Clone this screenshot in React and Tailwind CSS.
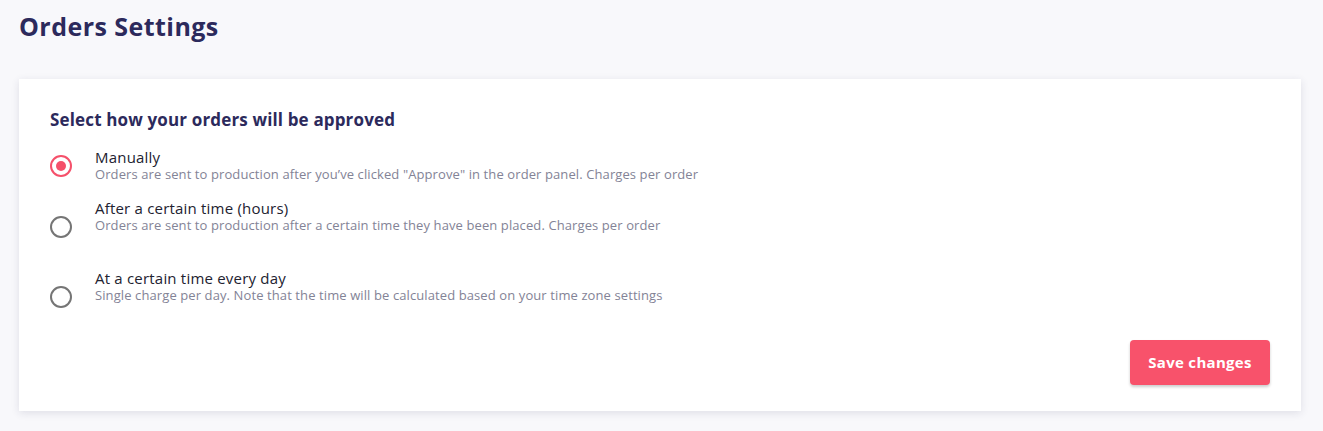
import React from "react";

const font = { fontFamily: "'Open Sans', Lato, sans-serif" };

function Radio({ checked }) {
  return (
    <span
      className={`flex h-[22px] w-[22px] shrink-0 items-center justify-center rounded-full border-2 ${
        checked ? "border-[#f5506a]" : "border-[#757575]"
      }`}
    >
      {checked && <span className="h-[10px] w-[10px] rounded-full bg-[#f5506a]" />}
    </span>
  );
}

function Option({ checked, title, desc, radioOffset, className }) {
  return (
    <div className={`flex items-start ${className}`}>
      <div className={`w-[45px] ${radioOffset}`}>
        <Radio checked={checked} />
      </div>
      <div className="flex flex-col">
        <span className="text-[15px] leading-[18px] tracking-[0.2px] text-[#222230]">{title}</span>
        <span className="text-[13px] leading-[16px] tracking-[0.1px] text-[#838396]">{desc}</span>
      </div>
    </div>
  );
}

export default function App() {
  return (
    <div className="min-h-[431px] bg-[#f8f8fb] pl-[19px] pr-[22px] pt-[10px]" style={font}>
      <h1 className="text-[25px] font-bold leading-[32px] tracking-[0.45px] text-[#2c2a5c]">Orders Settings</h1>
      <div className="mt-[37px] bg-white px-[31px] pb-[26px] pt-[31px] shadow-[0_2px_8px_rgba(40,40,80,0.12)]">
        <h2 className="text-[17px] font-bold leading-[20px] tracking-[0.15px] text-[#2c2a5c]">
          Select how your orders will be approved
        </h2>
        <Option
          className="mt-[18px]"
          checked
          title="Manually"
          desc={'Orders are sent to production after you\u2019ve clicked "Approve" in the order panel. Charges per order'}
          radioOffset="pt-[7px]"
        />
        <Option
          className="mt-[17px]"
          title="After a certain time (hours)"
          desc="Orders are sent to production after a certain time they have been placed. Charges per order"
          radioOffset="pt-[17px]"
        />
        <Option
          className="mt-[31px]"
          title="At a certain time every day"
          desc="Single charge per day. Note that the time will be calculated based on your time zone settings"
          radioOffset="pt-[17px]"
        />
        <div className="mt-[32px] flex justify-end">
          <button className="h-[45px] w-[140px] rounded-[4px] bg-[#f8526b] text-[15px] font-bold tracking-[0.3px] text-white shadow-[0_2px_3px_rgba(0,0,0,0.2)]">
            Save changes
          </button>
        </div>
      </div>
    </div>
  );
}
